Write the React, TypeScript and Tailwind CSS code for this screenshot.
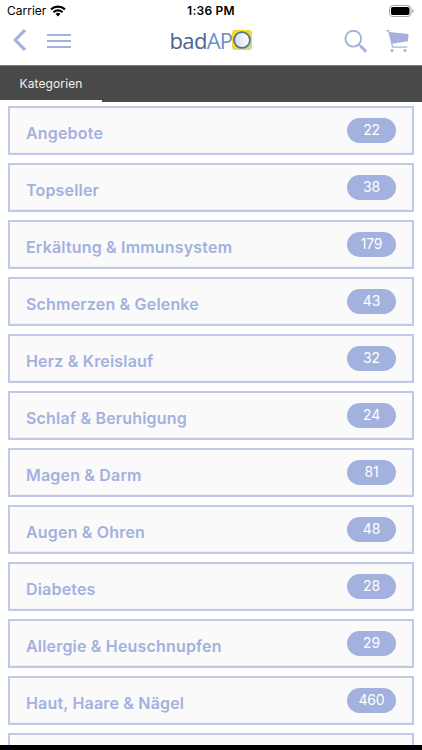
import { useState } from "react";

const categories = [
  { name: "Angebote", count: 22 },
  { name: "Topseller", count: 38 },
  { name: "Erkältung & Immunsystem", count: 179 },
  { name: "Schmerzen & Gelenke", count: 43 },
  { name: "Herz & Kreislauf", count: 32 },
  { name: "Schlaf & Beruhigung", count: 24 },
  { name: "Magen & Darm", count: 81 },
  { name: "Augen & Ohren", count: 48 },
  { name: "Diabetes", count: 28 },
  { name: "Allergie & Heuschnupfen", count: 29 },
  { name: "Haut, Haare & Nägel", count: 460 },
];

const StatusBar = () => (
  <div className="grid h-[22px] shrink-0 grid-cols-3 items-center pr-2 pl-[7px] text-[12px] text-black">
    <div className="flex items-center gap-[4px]">
      <span>Carrier</span>
      <svg width="16" height="12" viewBox="0 0 16 12" fill="none" stroke="#000">
        <path d="M1 4.4a10.3 10.3 0 0 1 14 0" strokeWidth="2.2" />
        <path d="M3.5 7.2a6.6 6.6 0 0 1 9 0" strokeWidth="2.2" />
        <path d="M8 11.4 5.6 9a3.5 3.5 0 0 1 4.8 0Z" fill="#000" stroke="none" />
      </svg>
    </div>
    <span className="pl-px text-center font-semibold tracking-[0.25px]">1:36 PM</span>
    <div className="flex justify-end">
      <svg width="25" height="12" viewBox="0 0 25 12">
        <rect x="0.5" y="0.5" width="21.5" height="11" rx="3.2" fill="none" stroke="#a3a3a3" />
        <rect x="2" y="2" width="18.5" height="8" rx="1.8" fill="#000" />
        <path d="M23.3 4v4c1.6-.6 1.6-3.4 0-4Z" fill="#8d8d8d" />
      </svg>
    </div>
  </div>
);

const Logo = () => (
  <div className="flex items-start" aria-label="badAPO">
    <span className="font-['Open_Sans',sans-serif] text-[22px] leading-5 font-medium tracking-[-0.7px] text-[#4b6492]">
      bad<span className="text-[#6d8fca]">AP</span>
    </span>
    <svg width="20" height="20" viewBox="0 0 20 20">
      <defs>
        <linearGradient id="tile" x1="0" y1="0" x2="0.6" y2="1">
          <stop offset="0.45" stopColor="#f3d928" />
          <stop offset="1" stopColor="#c5dd8c" />
        </linearGradient>
        <linearGradient id="disc" x1="0" y1="0" x2="1" y2="0">
          <stop offset="0" stopColor="#d9dce8" />
          <stop offset="1" stopColor="#ffffff" />
        </linearGradient>
      </defs>
      <rect width="20" height="20" rx="3" fill="url(#tile)" />
      <circle cx="10" cy="10" r="7.9" fill="url(#disc)" stroke="#5a7190" strokeWidth="1.8" />
    </svg>
  </div>
);

const Header = () => (
  <header className="grid h-[43px] shrink-0 grid-cols-3 items-start px-[13px]">
    <div className="flex items-start gap-[21px] pt-[7px]">
      <button aria-label="Zurück">
        <svg width="13" height="22" viewBox="0 0 13 22" fill="none" stroke="#a3b1de" strokeWidth="3.2">
          <path d="M12 1 2.3 11l9.7 10" />
        </svg>
      </button>
      <button aria-label="Menü" className="pt-[5px]">
        <svg width="24" height="14" viewBox="0 0 24 14" fill="#a3b1de">
          <path d="M0 0h24v2H0zM0 6h24v2H0zM0 12h24V14H0z" />
        </svg>
      </button>
    </div>
    <div className="flex justify-center pt-2">
      <Logo />
    </div>
    <div className="flex items-start justify-end gap-[18px] pt-2">
      <button aria-label="Suchen">
        <svg width="24" height="23" viewBox="0 0 24 23" fill="none" stroke="#a3b1de">
          <circle cx="9.3" cy="8.7" r="7.9" strokeWidth="1.9" />
          <path d="m14.8 14.3 2 2" strokeWidth="1.9" />
          <path d="m16.5 16 5.7 5.7" strokeWidth="3" />
        </svg>
      </button>
      <button aria-label="Warenkorb">
        <svg width="23" height="23" viewBox="0 0 23 23">
          <path d="M3.2 2.1 22.5 3.9l-.5 7.3L6 13.7Z" fill="#a3b1de" />
          <path d="M.4.6h2.2l4 16.6h14.7" fill="none" stroke="#a3b1de" strokeWidth="1.2" />
          <circle cx="6" cy="20.5" r="1.5" fill="#a3b1de" />
          <circle cx="19" cy="20.5" r="1.5" fill="#a3b1de" />
        </svg>
      </button>
    </div>
  </header>
);

const App = () => {
  const [selected, setSelected] = useState<string | null>(null);

  return (
    <div className="flex h-[750px] w-full flex-col overflow-hidden bg-white font-[Inter,sans-serif]">
      <StatusBar />
      <Header />

      <nav className="flex h-[37px] shrink-0 border-t border-[#777777] bg-[#494949]">
        <button className="w-[102px] border-b-2 border-white pt-px text-[12px] tracking-[0.1px] text-[#f2f2f2]">
          Kategorien
        </button>
      </nav>

      <main className="flex min-h-0 flex-1 flex-col gap-2 overflow-hidden px-2 pt-1">
        {categories.map((category) => (
          <button
            key={category.name}
            onClick={() => setSelected(category.name)}
            aria-pressed={selected === category.name}
            className="flex h-[49px] shrink-0 items-start justify-between border-2 border-[#bfc9e8] bg-[#fafafa] px-4 text-left shadow-[inset_0_-1px_0_#f0f0f4]"
          >
            <span className="pt-[13px] text-[16px] leading-6 font-semibold tracking-[0.18px] text-[#a3b1de]">
              {category.name}
            </span>
            <span className="mt-[10px] flex h-[25px] w-[49px] items-center justify-center rounded-full bg-[#a3b1de] pb-0.5 text-[14px] tracking-[-0.2px] text-white">
              {category.count}
            </span>
          </button>
        ))}
        <div className="h-[49px] shrink-0 border-2 border-[#bfc9e8] bg-[#fafafa]" />
      </main>

      <div className="h-[5px] shrink-0 bg-black" />
    </div>
  );
};

export default App;
